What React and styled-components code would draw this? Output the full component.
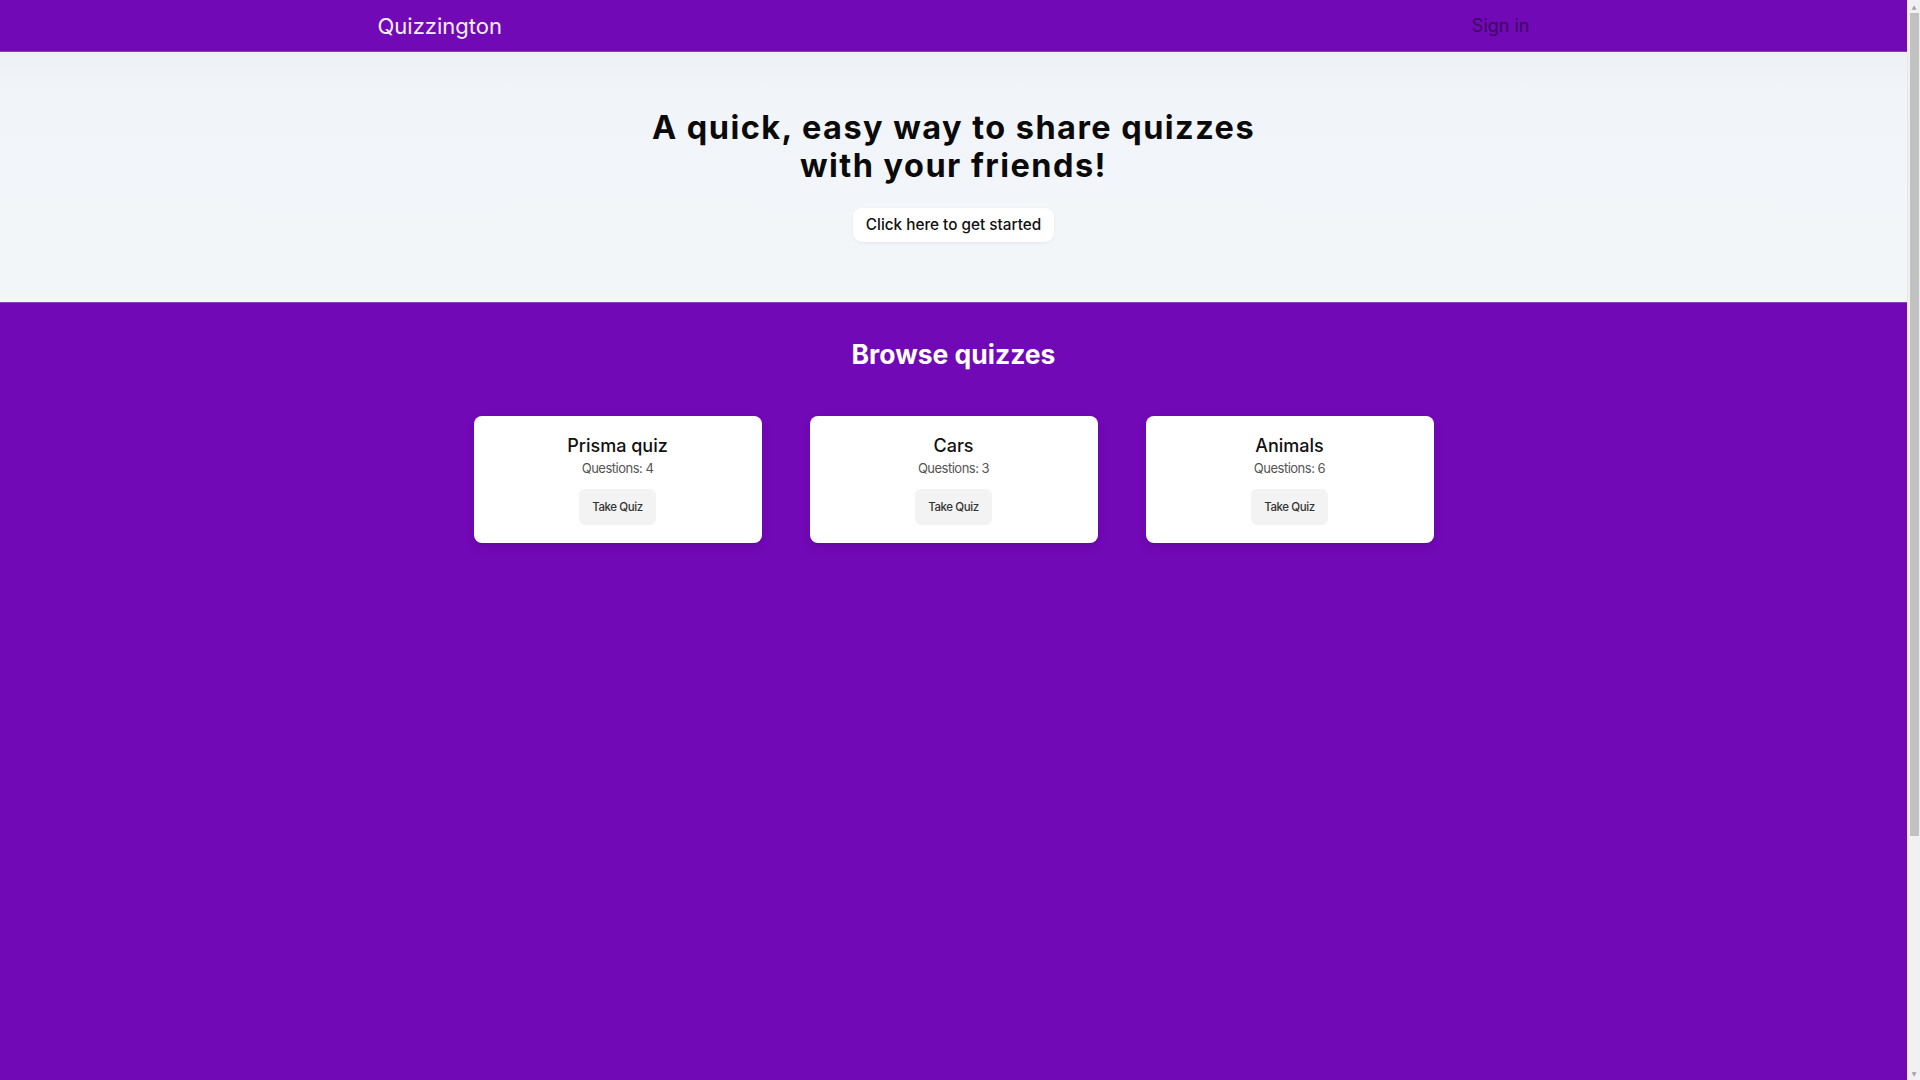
import React from "react";
import styled, { createGlobalStyle } from "styled-components";

const quizzes = [
  { id: 1, title: "Prisma quiz", questions: 4 },
  { id: 2, title: "Cars", questions: 3 },
  { id: 3, title: "Animals", questions: 6 },
];

const App = () => {
  return (
    <>
      <GlobalStyle />
      <Header>
        <HeaderInner>
          <Brand>Quizzington</Brand>
          <SignIn>Sign in</SignIn>
        </HeaderInner>
      </Header>

      <Hero>
        <HeroTitle>
          A quick, easy way to share quizzes
          <br />
          with your friends!
        </HeroTitle>
        <StartButton>Click here to get started</StartButton>
      </Hero>

      <Browse>
        <BrowseTitle>Browse quizzes</BrowseTitle>
        <QuizGrid>
          {quizzes.map((quiz) => (
            <QuizCard key={quiz.id}>
              <QuizTitle>{quiz.title}</QuizTitle>
              <QuizCount>Questions: {quiz.questions}</QuizCount>
              <TakeButton>Take Quiz</TakeButton>
            </QuizCard>
          ))}
        </QuizGrid>
      </Browse>

      {/* browser scrollbar as seen in the screenshot */}
      <ScrollTrack aria-hidden="true">
        <ScrollArrow>▲</ScrollArrow>
        <ScrollThumb />
        <ScrollSpace />
        <ScrollArrow>▼</ScrollArrow>
      </ScrollTrack>
    </>
  );
};

const GlobalStyle = createGlobalStyle`
  * {
    box-sizing: border-box;
  }
  body {
    margin: 0;
    padding-right: 13px;
    font-family: Inter, "Noto Sans", sans-serif;
    background: #7209b7;
  }
`;

const Header = styled.header`
  height: 51px;
  background: #7209b7;
  box-shadow: 0 1px 0 #8a3cc4;
  position: relative;
  z-index: 1;
`;

const HeaderInner = styled.div`
  max-width: 1152px;
  height: 100%;
  margin: 0 auto;
  display: flex;
  align-items: center;
  justify-content: space-between;
`;

const Brand = styled.div`
  font-size: 22px;
  color: #f6f0fa;
  padding-top: 1px;
`;

const SignIn = styled.button`
  background: none;
  border: none;
  padding: 0;
  font-family: inherit;
  font-size: 18px;
  color: #3b0a60;
  cursor: pointer;
`;

const Hero = styled.section`
  display: flex;
  flex-direction: column;
  align-items: center;
  padding: 58px 20px 60px;
  background: linear-gradient(#edf1f6 0px, #f1f5f9 40px, #f3f6f9 100%);
`;

const HeroTitle = styled.h1`
  margin: 0;
  font-size: 32.5px;
  line-height: 38px;
  font-weight: 700;
  letter-spacing: 1.45px;
  text-align: center;
  color: #0a0a0a;
`;

const StartButton = styled.button`
  margin-top: 23px;
  padding: 5px 13px;
  font-family: inherit;
  font-size: 15.3px;
  line-height: 24px;
  font-weight: 500;
  color: #111;
  background: #fff;
  border: none;
  border-radius: 9px;
  box-shadow: 0 1px 3px rgba(0, 0, 0, 0.06);
  cursor: pointer;
`;

const Browse = styled.main`
  min-height: 100vh;
  padding: 36px 20px;
  background: #7209b7;
  box-shadow: inset 0 1px 0 #8a3cc4;
`;

const BrowseTitle = styled.h2`
  margin: 0;
  font-size: 26.5px;
  line-height: 32px;
  font-weight: 700;
  text-align: center;
  color: #fff;
`;

const QuizGrid = styled.div`
  display: grid;
  grid-template-columns: repeat(3, 288px);
  gap: 48px;
  justify-content: center;
  margin-top: 46px;
`;

const QuizCard = styled.div`
  display: flex;
  flex-direction: column;
  align-items: center;
  padding: 18px 16px;
  background: #fff;
  border-radius: 8px;
  box-shadow: 0 4px 10px rgba(40, 0, 70, 0.18);
`;

const QuizTitle = styled.h3`
  margin: 0;
  font-size: 18px;
  line-height: 24px;
  font-weight: 500;
  color: #111;
`;

const QuizCount = styled.p`
  margin: 0;
  font-size: 13px;
  line-height: 20px;
  letter-spacing: -0.5px;
  color: #555;
`;

const TakeButton = styled.button`
  margin-top: 11px;
  padding: 10px 13px;
  font-family: inherit;
  font-size: 11.5px;
  line-height: 16px;
  font-weight: 500;
  letter-spacing: -0.4px;
  color: #333;
  background: #f3f3f3;
  border: none;
  border-radius: 6px;
  cursor: pointer;
`;

const ScrollTrack = styled.div`
  position: fixed;
  top: 0;
  right: 0;
  width: 13px;
  height: 100vh;
  display: flex;
  flex-direction: column;
  align-items: center;
  background: #f1f1f1;
  border-left: 1px solid #e6e6e6;
  z-index: 10;
`;

const ScrollArrow = styled.div`
  height: 13px;
  font-size: 6px;
  line-height: 13px;
  color: #a3a3a3;
  font-family: "DejaVu Sans", sans-serif;
`;

const ScrollThumb = styled.div`
  width: 9px;
  height: 823px;
  background: #c1c1c1;
`;

const ScrollSpace = styled.div`
  flex: 1;
`;

export default App;
